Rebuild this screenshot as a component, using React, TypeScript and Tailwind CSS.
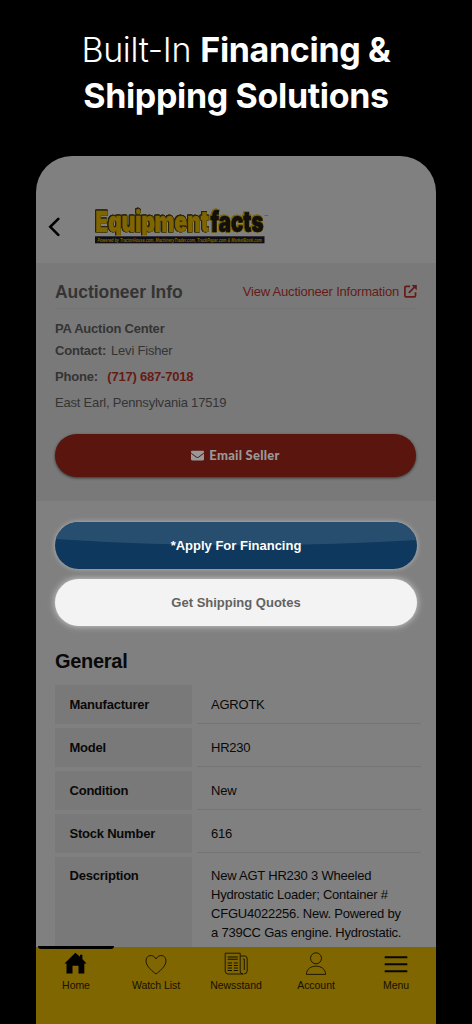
import { ReactNode } from 'react';
import { FaEnvelope } from 'react-icons/fa';

const specs = [
  { label: 'Manufacturer', value: 'AGROTK' },
  { label: 'Model', value: 'HR230' },
  { label: 'Condition', value: 'New' },
  { label: 'Stock Number', value: '616' },
];

const descriptionLines = [
  'New AGT HR230 3 Wheeled',
  'Hydrostatic Loader; Container #',
  'CFGU4022256. New. Powered by',
  'a 739CC Gas engine. Hydrostatic.',
  'AWM handling. Reversible and',
];

function Logo() {
  return (
    <svg width="176" height="38" viewBox="0 0 176 38" className="block shrink-0">
      <svg width="176" height="28.5" viewBox="0 0 176 28.5" fontFamily="Inter, sans-serif" fontSize="28" fontWeight="900">
        <text
          x="1.5" y="25" textLength="113.5" lengthAdjust="spacingAndGlyphs" fill="#806600" stroke="#806600" strokeWidth="0.6"
          className="[filter:drop-shadow(0.6px_0_0_#29240f)_drop-shadow(-0.6px_0_0_#29240f)_drop-shadow(0_0.6px_0_#29240f)_drop-shadow(0_-0.6px_0_#29240f)]"
        >
          Equipment
        </text>
        <text
          x="116.5" y="25" textLength="53" lengthAdjust="spacingAndGlyphs" fill="#11100d" stroke="#11100d" strokeWidth="0.6"
          className="[filter:drop-shadow(0.5px_0_0_#806600)_drop-shadow(-0.5px_0_0_#806600)_drop-shadow(0_0.5px_0_#806600)_drop-shadow(0_-0.5px_0_#806600)]"
        >
          facts
        </text>
      </svg>
      <rect x="1" y="29.3" width="169.5" height="7" fill="#0e0e14" />
      <text x="3.5" y="34.8" textLength="164.5" lengthAdjust="spacingAndGlyphs" fontSize="5.6" fontWeight="bold" fontStyle="italic" fill="#806600">
        Powered by TractorHouse.com, MachineryTrader.com, TruckPaper.com &amp; MarketBook.com
      </text>
      <text x="170.5" y="9" fontSize="2.5" fill="#222">TM</text>
    </svg>
  );
}

function ExternalIcon() {
  return (
    <svg width="13" height="13" viewBox="0 0 13 13" fill="none" stroke="#671b15" strokeWidth="1.7" className="shrink-0">
      <path d="M6 1.3H2Q.9 1.3.9 2.4V10.8Q.9 11.9 2 11.9H10.4Q11.5 11.9 11.5 10.8V7.3" />
      <path d="M4.8 7.8 11 1.6" />
      <path d="M7.6 0H12.8V5.2Z" fill="#671b15" stroke="none" />
    </svg>
  );
}

function NavItem({ label, children }: { label: string; children: ReactNode }) {
  return (
    <div className="flex w-20 flex-col items-center pt-[4px]">
      <svg width="26" height="25" viewBox="0 0 26 25" fill="none" stroke="#151100" strokeWidth="0.9">
        {children}
      </svg>
      <span className="mt-[3px] text-[10.5px] leading-[13px] tracking-[-0.05px] whitespace-nowrap text-[#151000]">{label}</span>
    </div>
  );
}

function BottomNav() {
  return (
    <nav className="relative flex h-[77px] shrink-0 bg-[#7f6600]">
      <div className="absolute top-[-1px] left-[2px] h-[3px] w-[76px] rounded-b bg-black" />
      <NavItem label="Home">
        <path d="M1.5 12.4 12.4 1.7 17 5.8V3.8H19.4V8L23.5 12.4H21.3V22.6H15.5V14.8H9.5V22.6H3.5V12.4Z" fill="#000" stroke="none" />
      </NavItem>
      <NavItem label="Watch List">
        <path d="M13 23C10 20.8 3 15.4 3 10C3 3.4 10.4 2.8 13 8C15.6 2.8 23 3.4 23 10C23 15.4 16 20.8 13 23Z" />
      </NavItem>
      <NavItem label="Newsstand">
        <path d="M2.2 2.2H17.2V20Q17.2 23 20 23H5Q2.2 23 2.2 20Z" />
        <path d="M17.2 5H22Q24.2 5 24.2 8V20Q24.2 23 20.6 23M20.2 8H21.3V19" />
        <path d="M4.7 6H14.8M4.7 8.2H14.8" strokeWidth="1.1" />
        <path d="M4.7 12H9M10.8 12H14.8M4.7 14.5H9M10.8 14.5H14.8M4.7 17H9M10.8 17H14.8M4.7 19.5H9M10.8 19.5H14.8" strokeWidth="1.1" />
      </NavItem>
      <NavItem label="Account">
        <circle cx="13" cy="7.3" r="5.5" />
        <path d="M3.4 23.4C3.4 12.4 22.6 12.4 22.6 23.4Z" />
      </NavItem>
      <NavItem label="Menu">
        <path d="M1.7 6.3H24.3M1.7 13.3H24.3M1.7 20.3H24.3" stroke="#070600" strokeWidth="2" />
      </NavItem>
    </nav>
  );
}

function AuctioneerInfo() {
  return (
    <section className="h-[238px] shrink-0 bg-[#797979] px-[19px] text-[13px] leading-[18px] tracking-[-0.2px] text-[#343434]">
      <div className="flex h-[46px] items-center justify-between border-b border-[#727272] pt-3">
        <h2 className="text-[17.5px] leading-5 font-bold tracking-[-0.05px]">Auctioneer Info</h2>
        <a className="flex items-center gap-[5px] text-[#671b15]">
          <span className="whitespace-nowrap">View Auctioneer Information</span>
          <ExternalIcon />
        </a>
      </div>
      <p className="mt-[11px] h-[22px] font-bold">PA Auction Center</p>
      <p className="h-[26px]">
        <b>Contact:</b> <span className="ml-[1.5px]">Levi Fisher</span>
      </p>
      <p className="h-[26px] font-bold">
        Phone: <span className="ml-[6px] text-[#671b15]">(717) 687-7018</span>
      </p>
      <p>East Earl, Pennsylvania 17519</p>
      <button className="mt-[22px] flex h-[43px] w-[361px] items-center justify-center gap-[5px] rounded-full bg-[#5a150f] text-[#999] shadow-[0_1px_3px_rgba(0,0,0,0.6)]">
        <FaEnvelope size={13} />
        <span className="pb-[2px] font-[Lato] text-[13px] font-black tracking-[0.25px]">Email Seller</span>
      </button>
    </section>
  );
}

function QuoteButtons() {
  return (
    <section className="mt-[21px] flex shrink-0 flex-col gap-[10px] px-[19px] text-[13px] font-bold">
      <button className="relative h-[47px] w-[362px] rounded-full bg-[#0e385d] text-white shadow-[0_0_5px_rgba(210,210,210,0.7)]">
        <svg className="absolute inset-0 rounded-full" width="362" height="47" viewBox="0 0 362 47">
          <path d="M0 0H362V18Q181 29 0 17Z" fill="#284e6f" />
        </svg>
        <span className="relative">*Apply For Financing</span>
      </button>
      <button className="h-[47px] w-[362px] rounded-full bg-[#f3f3f3] text-[#626262] shadow-[0_0_7px_rgba(230,230,230,0.8)]">
        Get Shipping Quotes
      </button>
    </section>
  );
}

function General() {
  return (
    <section className="mt-[24px] min-h-0 flex-1 overflow-hidden pr-[15px] pl-[19px] text-[#090909]">
      <h2 className="text-[20px] leading-[22px] font-bold tracking-[-0.3px]">General</h2>
      <dl className="mt-[13px] flex flex-col gap-[4px] text-[13px] tracking-[-0.22px]">
        {specs.map((row) => (
          <div key={row.label} className="flex h-[39px] gap-[5px]">
            <dt className="flex w-[137px] shrink-0 items-center bg-[#797979] pl-[14.5px] font-bold">{row.label}</dt>
            <dd className="flex flex-1 items-center border-b border-[#757575] pt-px pl-[14px]">{row.value}</dd>
          </div>
        ))}
        <div className="flex h-[100px] gap-[5px]">
          <dt className="w-[137px] shrink-0 bg-[#797979] pt-[9px] pl-[14.5px] leading-[19px] font-bold">Description</dt>
          <dd className="flex-1 pt-[9px] pl-[14px] leading-[19px] whitespace-nowrap">
            {descriptionLines.map((line) => (
              <div key={line}>{line}</div>
            ))}
          </dd>
        </div>
      </dl>
    </section>
  );
}

export default function App() {
  return (
    <div className="flex h-[1024px] w-[472px] flex-col overflow-hidden bg-black font-['Liberation_Sans',Arial,sans-serif]">
      <h1 className="h-[156px] shrink-0 pt-[27px] text-center font-['Inter',sans-serif] text-[34px] leading-[46px] font-light tracking-[-0.34px] text-white">
        Built-In <span className="font-bold">Financing &amp;</span>
        <br />
        <span className="font-bold">Shipping Solutions</span>
      </h1>
      <div className="mx-auto flex min-h-0 w-[400px] flex-1 flex-col overflow-hidden rounded-t-[36px] bg-[#808080]">
        <header className="flex h-[107px] shrink-0 items-start pt-[51px] pl-[12px]">
          <svg width="13" height="20" viewBox="0 0 13 20" fill="none" stroke="#000" strokeWidth="2.6" strokeLinecap="round" className="mt-[10px] mr-[33px]">
            <path d="M10.3 1.8 2.3 9.8 10.3 17.8" />
          </svg>
          <Logo />
        </header>
        <AuctioneerInfo />
        <QuoteButtons />
        <General />
        <BottomNav />
      </div>
    </div>
  );
}
